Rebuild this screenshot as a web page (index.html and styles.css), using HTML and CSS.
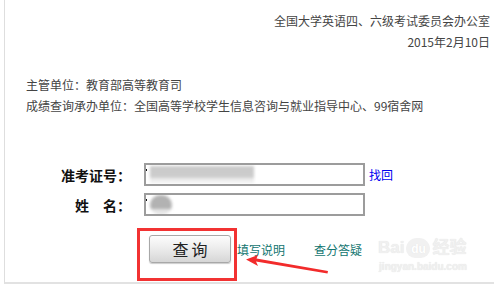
FILE: index.html
```html
<!DOCTYPE html>
<html lang="zh-CN">
<head>
    <meta charset="UTF-8">
    <title>成绩查询</title>
    <link rel="stylesheet" href="styles.css">
</head>
<body>

    <div class="page">
        <div class="issuer">
            <p>全国大学英语四、六级考试委员会办公室</p>
            <p>2015年2月10日</p>
        </div>

        <div class="info">
            <p>主管单位：教育部高等教育司</p>
            <p>成绩查询承办单位：全国高等学校学生信息咨询与就业指导中心、99宿舍网</p>
        </div>

        <form class="query">
            <div class="row">
                <label>准考证号：</label>
                <div class="field">
                    <span class="caret"></span>
                    <span class="blur blur-long"></span>
                </div>
                <a class="find" href="#">找回</a>
            </div>
            <div class="row">
                <label>姓　名：</label>
                <div class="field">
                    <span class="caret"></span>
                    <span class="blur blur-short"></span>
                </div>
            </div>
            <div class="actions">
                <button type="button">查询</button>
                <a href="#">填写说明</a>
                <a href="#">查分答疑</a>
            </div>
        </form>

        <!-- screenshot annotations -->
        <div class="highlight"></div>
        <svg class="arrow" width="494" height="290" viewBox="0 0 494 290">
            <polygon points="246,259.5 258,255 256.5,258.6 328,271 327.5,273.5 256,261.5 258,266" fill="#f22b2b"/>
        </svg>

        <div class="mark">
            <div class="mark-logo">
                <span>Bai</span>
                <span class="paw">du</span>
                <span>经验</span>
            </div>
            <div class="mark-url">jingyan.baidu.com</div>
        </div>
    </div>

</body>
</html>
```

FILE: styles.css
```css
body {
    margin: 0;
    background-color: #fff;
    font-family: "Noto Sans CJK SC", "Liberation Sans", sans-serif;
    font-size: 12px;
    color: #444;
}

p {
    margin: 0;
}

.page {
    position: relative;
    width: 489px;
    height: 282px;
    margin-left: 4px;
    border-left: 1px solid #dedede;
    border-bottom: 2px solid #e2e2e2;
}

.issuer {
    padding-top: 10px;
    padding-right: 4px;
    text-align: right;
    line-height: 21px;
}

.info {
    margin-top: 22px;
    padding-left: 21px;
    line-height: 21px;
}

.query {
    margin-top: 47px;
    padding-left: 56px;
}

.row {
    display: flex;
    align-items: center;
    height: 23px;
    margin-bottom: 7px;
}

.row label {
    width: 70px;
    margin-right: 13px;
    text-align: right;
    font-size: 14px;
    font-weight: bold;
    color: #111;
}

.field {
    display: flex;
    align-items: flex-start;
    width: 217px;
    height: 19px;
    border: 2px solid #9c9c9c;
    overflow: hidden;
}

.caret {
    width: 1px;
    height: 2px;
    margin-top: 4px;
    background-color: #111;
}

.blur {
    height: 17px;
    margin-left: 3px;
    margin-top: 1px;
    filter: blur(1.5px);
}

.blur-long {
    width: 104px;
    background: linear-gradient(#c9c9c9 0, #cdcdcd 70%, #eee 70%);
}

.blur-short {
    width: 22px;
    margin-top: 0;
    height: 20px;
    border-radius: 10px;
    background: linear-gradient(#b2b2b2 0, #b2b2b2 70%, #e6e6e6 70%);
}

.find {
    margin-left: 4px;
    font-size: 12px;
    color: #0000f0;
    text-decoration: none;
}

.actions {
    display: flex;
    align-items: center;
    margin-top: 19px;
    padding-left: 88px;
}

.actions button {
    width: 82px;
    height: 28px;
    padding: 0 0 0 3px;
    font-family: inherit;
    font-size: 16px;
    letter-spacing: 3px;
    color: #222;
    background: linear-gradient(#fdfdfd, #e9e9e9 55%, #d6d6d6);
    border: 1px solid #a8a8a8;
    border-radius: 3px;
    box-shadow: 0 1px 1px #ccc;
}

.actions a {
    font-size: 12px;
    color: #11756f;
    text-decoration: none;
}

.actions button + a {
    margin-left: 6px;
    margin-right: 29px;
}

.highlight {
    position: absolute;
    left: 132px;
    top: 228px;
    width: 94px;
    height: 47px;
    border: 3px solid #f23232;
}

.arrow {
    position: absolute;
    left: -5px;
    top: 0;
}

.mark {
    position: absolute;
    left: 373px;
    top: 236px;
    width: 90px;
    color: #f0f0f0;
    text-align: center;
}

.mark-logo {
    display: flex;
    align-items: center;
    gap: 2px;
    font-family: "Liberation Sans", "Noto Sans CJK SC", sans-serif;
    font-size: 17px;
    font-weight: bold;
    line-height: 24px;
    text-shadow: 0 0 1px #dedede;
}

.paw {
    width: 24px;
    height: 20px;
    border-radius: 12px 12px 10px 10px;
    background-color: #f1f1f1;
    color: #fff;
    font-size: 12px;
    line-height: 22px;
}

.mark-url {
    font-family: "Liberation Sans", sans-serif;
    font-size: 10px;
    font-weight: bold;
    line-height: 14px;
    text-shadow: 0 0 1px #dedede;
}
```
